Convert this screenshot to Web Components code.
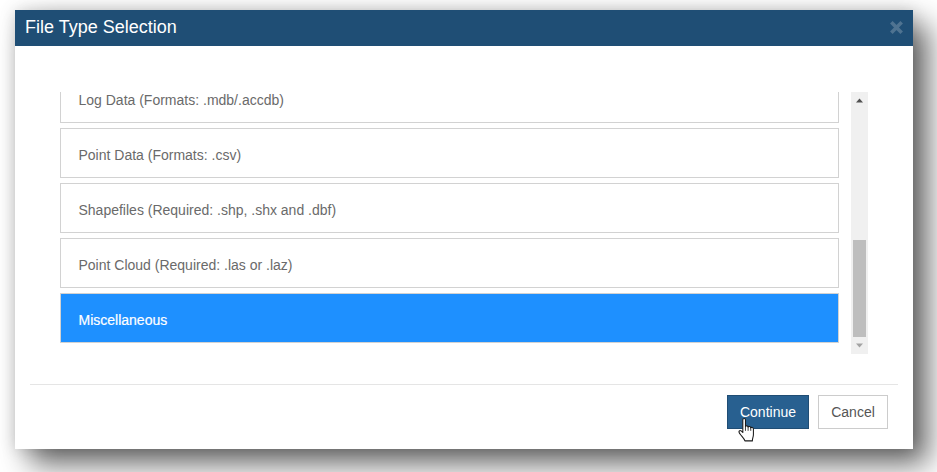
<!DOCTYPE html>
<html>
<head>
<meta charset="utf-8">
<style>
  html, body { margin: 0; background: #fff; height: 472px; overflow: hidden; }
  body { font-family: "Liberation Sans", Arial, sans-serif; }
</style>
</head>
<body>
<file-dialog title-text="File Type Selection">
  <file-option>Log Data (Formats: .mdb/.accdb)</file-option>
  <file-option>Point Data (Formats: .csv)</file-option>
  <file-option>Shapefiles (Required: .shp, .shx and .dbf)</file-option>
  <file-option>Point Cloud (Required: .las or .laz)</file-option>
  <file-option selected>Miscellaneous</file-option>
</file-dialog>

<script>
class FileOption extends HTMLElement {
  constructor() {
    super();
    this.attachShadow({ mode: "open" });
    this.shadowRoot.innerHTML = `
<style>
  :host {
    display: flex;
    flex: none;
    align-items: center;
    height: 50px;
    box-sizing: border-box;
    padding: 4px 17.5px 0;
    border: 1px solid #d2d2d2;
    background: #fff;
    color: #6a6a6a;
    font-size: 14px;
  }
  :host([selected]) {
    background: #1e90ff;
    color: #fff;
    -webkit-text-stroke: 0.2px #fff;
  }
</style>
<slot></slot>`;
  }
}

class FakeScrollbar extends HTMLElement {
  constructor() {
    super();
    this.attachShadow({ mode: "open" });
    this.shadowRoot.innerHTML = `
<style>
  :host {
    display: flex;
    flex-direction: column;
    flex: none;
    width: 17px;
    background: #f0f0f0;
  }
  .arrow {
    flex: none;
    height: 17px;
    display: flex;
    align-items: center;
    justify-content: center;
  }
  .track {
    flex: 1;
    display: flex;
    flex-direction: column;
    justify-content: flex-end;
  }
  .thumb {
    height: 97px;
    margin: 0 2px;
    background: #bebebe;
  }
</style>
<div class="arrow"><svg width="9" height="5" viewBox="0 0 9 5"><path d="M4.5 0.5 L8 4.5 H1 Z" fill="#505050"/></svg></div>
<div class="track"><div class="thumb"></div></div>
<div class="arrow"><svg width="9" height="5" viewBox="0 0 9 5"><path d="M1 0.5 H8 L4.5 4.5 Z" fill="#a3a3a3"/></svg></div>`;
  }
}

class FileDialog extends HTMLElement {
  constructor() {
    super();
    this.attachShadow({ mode: "open" });
    this.shadowRoot.innerHTML = `
<style>
  :host {
    display: flex;
    flex-direction: column;
    position: relative;
    box-sizing: border-box;
    width: 898px;
    height: 439px;
    margin: 10px 0 0 15px;
    background: #fff;
    box-shadow: 15px 15px 28px rgba(0, 0, 0, .6), 0 0 15px rgba(0, 0, 0, .16);
  }
  header {
    display: flex;
    flex: none;
    align-items: center;
    justify-content: space-between;
    height: 36px;
    box-sizing: border-box;
    padding: 0 10px 2px;
    background: #1f4e75;
    color: #fff;
    font-size: 18px;
  }
  header svg { display: block; }
  .body {
    display: flex;
    flex: none;
    gap: 12px;
    height: 262px;
    margin-top: 46px;
    padding-left: 45px;
  }
  .list {
    display: flex;
    flex-direction: column;
    justify-content: flex-end;
    gap: 5px;
    width: 779px;
    box-sizing: border-box;
    padding-bottom: 11px;
    overflow: hidden;
  }
  hr {
    flex: none;
    align-self: stretch;
    height: 1px;
    margin: 30px 15px 0;
    border: 0;
    background: #e5e5e5;
  }
  footer {
    display: flex;
    justify-content: flex-end;
    gap: 9px;
    padding: 10px 25px 0 0;
  }
  button {
    height: 34px;
    box-sizing: border-box;
    padding: 0;
    font: 14px "Liberation Sans", Arial, sans-serif;
    border-radius: 0;
  }
  .primary {
    width: 82px;
    background: #286090;
    border: 1px solid #204d74;
    color: #fff;
  }
  .plain {
    width: 70px;
    background: #fff;
    border: 1px solid #ccc;
    color: #555;
  }
  .cursor {
    position: absolute;
    left: 722px;
    top: 407px;
  }
</style>
<header>
  <span id="title"></span>
  <svg width="13" height="13" viewBox="0 0 13 13"><path d="M2.6 2.6 L10.4 10.4 M10.4 2.6 L2.6 10.4" stroke="#4f7391" stroke-width="3.6" stroke-linecap="square" fill="none"/></svg>
</header>
<div class="body">
  <div class="list"><slot></slot></div>
  <fake-scrollbar></fake-scrollbar>
</div>
<hr>
<footer>
  <button class="primary">Continue</button>
  <button class="plain">Cancel</button>
</footer>
<svg class="cursor" width="18" height="25" viewBox="0 0 17 23.5">
  <path d="M5.5 2.5 C5.5 1 8 1 8 2.5 V9 C8.2 8 10.4 8 10.5 9.5 C10.8 8.6 12.9 8.8 13 10.2 C13.4 9.4 15.5 9.7 15.5 11.2 V16.5 C15.5 19 14.5 20 14.5 22.5 H7.5 C7.2 21 5 18.8 3.2 16.5 C2 15 1.2 14 2.2 13 C3.2 12.2 4.5 13.4 5.5 14.6 Z" fill="#fff" stroke="#1a1a1a" stroke-width="1" stroke-linejoin="round"/>
  <path d="M8 9 V13 M10.5 9.5 V13 M13 10.2 V13" stroke="#1a1a1a" stroke-width="0.8" fill="none"/>
</svg>`;
    this.shadowRoot.getElementById("title").textContent = this.getAttribute("title-text");
  }
}

customElements.define("file-option", FileOption);
customElements.define("fake-scrollbar", FakeScrollbar);
customElements.define("file-dialog", FileDialog);
</script>
</body>
</html>
